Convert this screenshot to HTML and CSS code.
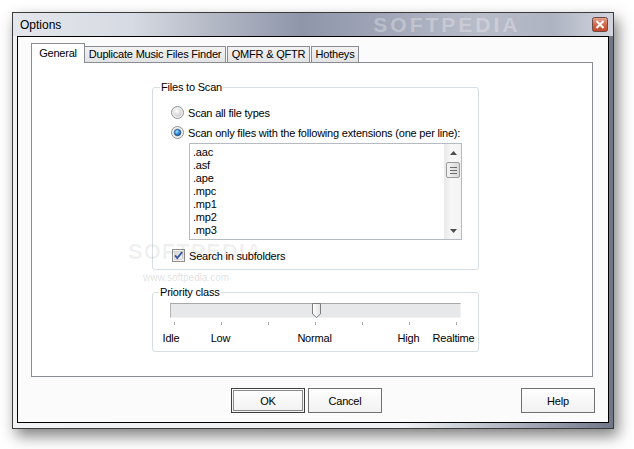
FILE: index.html
```html
<!DOCTYPE html>
<html>
<head>
<meta charset="utf-8">
<title>Options</title>
<link rel="stylesheet" href="styles.css">
</head>
<body>
<div class="window">
  <div class="titlebar">
    <span class="title">Options</span>
    <span class="wm-title">SOFTPEDIA</span>
    <span class="close">
      <svg width="16" height="15" viewBox="0 0 16 15">
        <defs>
          <linearGradient id="cg" x1="0" y1="0" x2="0" y2="1">
            <stop offset="0" stop-color="#e6a592"/>
            <stop offset="0.5" stop-color="#d16a4c"/>
            <stop offset="1" stop-color="#c04428"/>
          </linearGradient>
        </defs>
        <rect x="0.5" y="0.5" width="15" height="14" rx="2" fill="url(#cg)" stroke="#6e4a44"/>
        <path d="M5.2 4.7 L10.8 10.3 M10.8 4.7 L5.2 10.3" stroke="#fff" stroke-width="2" stroke-linecap="square"/>
      </svg>
    </span>
  </div>
  <div class="client">
    <div class="tabs">
      <div class="tab active t-general">General</div>
      <div class="tab t-dup">Duplicate Music Files Finder</div>
      <div class="tab t-qmfr">QMFR &amp; QFTR</div>
      <div class="tab t-hot">Hotheys</div>
    </div>
    <div class="panel">
      <fieldset class="group files">
        <legend>Files to Scan</legend>
        <div class="opt first">
          <svg class="radio" width="13" height="13" viewBox="0 0 13 13">
            <defs>
              <radialGradient id="rg" cx="0.4" cy="0.35" r="0.7">
                <stop offset="0" stop-color="#ffffff"/>
                <stop offset="1" stop-color="#c9c9c9"/>
              </radialGradient>
            </defs>
            <circle cx="6.5" cy="6.5" r="6" fill="#f3f3f3" stroke="#8e8f8f"/>
            <circle cx="6.5" cy="6.5" r="4.3" fill="url(#rg)"/>
          </svg>
          <span>Scan all file types</span>
        </div>
        <div class="opt second">
          <svg class="radio" width="13" height="13" viewBox="0 0 13 13">
            <defs>
              <radialGradient id="rb" cx="0.4" cy="0.35" r="0.7">
                <stop offset="0" stop-color="#9fe3ff"/>
                <stop offset="0.6" stop-color="#2a8ad8"/>
                <stop offset="1" stop-color="#0f3f86"/>
              </radialGradient>
            </defs>
            <circle cx="6.5" cy="6.5" r="6" fill="#f3f3f3" stroke="#8e8f8f"/>
            <circle cx="6.5" cy="6.5" r="4.3" fill="#d4d4d4"/>
            <circle cx="6.5" cy="6.5" r="3.2" fill="url(#rb)" stroke="#1c3f73" stroke-width="0.6"/>
          </svg>
          <span>Scan only files with the following extensions (one per line):</span>
        </div>
        <div class="listbox">
          <div class="items">
            <div class="item">.aac</div>
            <div class="item">.asf</div>
            <div class="item">.ape</div>
            <div class="item">.mpc</div>
            <div class="item">.mp1</div>
            <div class="item">.mp2</div>
            <div class="item">.mp3</div>
          </div>
          <div class="scrollbar">
            <div class="sb-btn">
              <svg width="7" height="4" viewBox="0 0 7 4"><path d="M0 4 L3.5 0 L7 4 Z" fill="#4d4d4d"/></svg>
            </div>
            <div class="sb-thumb">
              <span class="grip"></span><span class="grip"></span><span class="grip"></span>
            </div>
            <div class="sb-track"></div>
            <div class="sb-btn">
              <svg width="7" height="4" viewBox="0 0 7 4"><path d="M0 0 L7 0 L3.5 4 Z" fill="#4d4d4d"/></svg>
            </div>
          </div>
        </div>
        <div class="opt check">
          <svg class="checkbox" width="13" height="13" viewBox="0 0 13 13">
            <defs>
              <linearGradient id="kg" x1="0" y1="0" x2="1" y2="1">
                <stop offset="0" stop-color="#d6d6d6"/>
                <stop offset="1" stop-color="#fbfbfb"/>
              </linearGradient>
            </defs>
            <rect x="0.5" y="0.5" width="12" height="12" fill="#f4f4f4" stroke="#8e8f8f"/>
            <rect x="2.5" y="2.5" width="8" height="8" fill="url(#kg)" stroke="#c4c4c4" stroke-width="0.6"/>
            <path d="M3 6.3 L5.3 9 L10.2 3" fill="none" stroke="#3a5aa6" stroke-width="1.9"/>
          </svg>
          <span>Search in subfolders</span>
        </div>
      </fieldset>

      <fieldset class="group priority">
        <legend>Priority class</legend>
        <div class="track">
          <span class="thumb">
            <svg width="9" height="15" viewBox="0 0 9 15">
              <defs>
                <linearGradient id="tg" x1="0" y1="0" x2="1" y2="0">
                  <stop offset="0" stop-color="#ffffff"/>
                  <stop offset="1" stop-color="#e2e2e2"/>
                </linearGradient>
              </defs>
              <path d="M0.5 0.5 H8.5 V11 L4.5 14.5 L0.5 11 Z" fill="url(#tg)" stroke="#7d7d7d"/>
            </svg>
          </span>
        </div>
        <div class="ticks">
          <i></i><i></i><i></i><i></i><i></i><i></i><i></i>
        </div>
        <div class="labels">
          <span>Idle</span><span>Low</span><span></span><span>Normal</span><span></span><span>High</span><span class="rt">Realtime</span>
        </div>
      </fieldset>

      <span class="wm-big">SOFTPEDIA</span>
      <span class="wm-url">www.softpedia.com</span>
    </div>
    <div class="buttons">
      <div class="btn default"><span>OK</span></div>
      <div class="btn cancel"><span>Cancel</span></div>
      <div class="btn help"><span>Help</span></div>
    </div>
  </div>
</div>
</body>
</html>
```

FILE: styles.css
```css
* { box-sizing: border-box; }

html { background: #ffffff; }

body {
  margin: 0;
  padding: 12px 0 0 12px;
  min-height: 449px;
  background: #ffffff;
  font-family: "Liberation Sans", Arial, sans-serif;
  font-size: 11px;
  letter-spacing: -0.2px;
  color: #000;
}

.window {
  width: 602px;
  height: 417px;
  border: 1px solid #3b3b3b;
  background: linear-gradient(90deg, #f1f2f4 0%, #eef0f3 65%, #a7adbb 85%, #6f7688 100%);
  box-shadow: 4px 7px 14px rgba(0, 0, 0, 0.5);
  display: flex;
  flex-direction: column;
}

.titlebar {
  height: 23px;
  display: flex;
  align-items: flex-start;
  padding-left: 7px;
  background: linear-gradient(90deg, #e3e6ec 0%, #d6dae2 20%, #b4b9c6 33%, #8f96aa 48%, #9ea4b6 60%, #b9bdca 78%, #aeb3c2 90%, #d2d5de 100%);
}

.title {
  font-size: 12px;
  letter-spacing: 0;
  line-height: 16px;
  margin-top: 4px;
  color: #000;
}

.wm-title {
  flex: none;
  margin-left: 312px;
  margin-top: 1px;
  font-size: 21px;
  font-weight: bold;
  letter-spacing: 3px;
  line-height: 21px;
  color: rgba(255, 255, 255, 0.28);
  white-space: nowrap;
}

.close {
  flex: none;
  margin-left: auto;
  margin-right: 5px;
  margin-top: 4px;
  width: 16px;
  height: 15px;
  display: flex;
}

.client {
  flex: 1;
  margin: 0 4px 5px 4px;
  border: 1px solid #000;
  background: #fbfbfb;
  padding: 6px 15px 0 13px;
  display: flex;
  flex-direction: column;
}

.tabs {
  display: flex;
  align-items: flex-end;
  height: 19px;
}

.tab {
  height: 16px;
  border: 1px solid #898c95;
  border-bottom: none;
  background: linear-gradient(#f3f3f3, #e3e3e3);
  text-align: center;
  line-height: 15px;
  white-space: nowrap;
}

.tab.active {
  height: 20px;
  margin-bottom: -1px;
  background: #ffffff;
  position: relative;
  z-index: 1;
  line-height: 19px;
}

.t-general { width: 54px; }
.t-dup { width: 142px; margin-left: -1px; }
.t-qmfr { width: 83px; margin-left: 1px; }
.t-hot { width: 48px; margin-left: 1px; }

.panel {
  position: relative;
  height: 315px;
  border: 1px solid #898c95;
  background: #ffffff;
  padding: 18px 0 0 120px;
}

.group {
  margin: 0;
  width: 327px;
  border: 1px solid #d5dfe5;
  border-radius: 3px;
  min-width: 0;
}

.group legend {
  margin-left: -11px;
  padding: 0 1px;
  line-height: 13px;
  font-size: 11px;
}

.files {
  padding: 0 0 5px 18px;
}

.opt {
  display: flex;
  align-items: center;
  height: 17px;
  white-space: nowrap;
}

.opt svg { flex: none; margin-right: 4px; }

.opt.first { margin-top: 10px; }
.opt.second { margin-top: 3px; }

.listbox {
  margin: 2px 0 0 18px;
  width: 273px;
  height: 97px;
  border: 1px solid #b6bac1;
  background: #fff;
  display: flex;
}

.items {
  flex: 1;
  padding: 2px 0 0 3px;
  overflow: hidden;
}

.item {
  line-height: 13px;
  height: 13px;
}

.scrollbar {
  width: 17px;
  background: linear-gradient(90deg, #eaeaea, #f7f7f7 40%, #f3f3f3);
  border-left: 1px solid #ececec;
  display: flex;
  flex-direction: column;
}

.sb-btn {
  height: 17px;
  display: flex;
  align-items: center;
  justify-content: center;
}

.sb-thumb {
  margin: 1px 1px 0 1px;
  height: 16px;
  border: 1px solid #9a9a9a;
  border-radius: 2px;
  background: linear-gradient(90deg, #f4f4f4, #e6e6e6 50%, #d9d9d9);
  display: flex;
  flex-direction: column;
  align-items: center;
  justify-content: center;
  gap: 2px;
}

.grip {
  width: 7px;
  height: 1px;
  background: #6c6c6c;
}

.sb-track { flex: 1; }

.opt.check {
  margin-top: 7px;
  padding-left: 1px;
}

.priority {
  margin-top: 16px;
  padding: 0 0 6px 17px;
}

.track {
  position: relative;
  margin-top: 4px;
  width: 291px;
  height: 15px;
  background: #e7e8e9;
  border-top: 1px solid #a8a8a8;
  border-left: 1px solid #b4b4b4;
  border-bottom: 1px solid #f2f2f2;
  border-right: 1px solid #f2f2f2;
}

.thumb {
  position: absolute;
  left: 141px;
  top: -1px;
  width: 9px;
  height: 15px;
  display: flex;
}

.ticks {
  margin-top: 4px;
  width: 291px;
  height: 3px;
  padding: 0 4px;
  display: flex;
  justify-content: space-between;
}

.ticks i {
  width: 1px;
  height: 3px;
  background: #a9a9a9;
}

.labels {
  margin: 7px 0 0 -20px;
  display: grid;
  grid-template-columns: repeat(7, 47px);
  line-height: 13px;
}

.labels span {
  text-align: center;
  white-space: nowrap;
}

.labels span:first-child { padding-right: 5px; }

.labels .rt { margin-left: -4px; }

.wm-big {
  position: absolute;
  left: 96px;
  top: 176px;
  font-size: 22px;
  font-weight: bold;
  letter-spacing: 1px;
  color: rgba(0, 0, 0, 0.06);
  pointer-events: none;
}

.wm-url {
  position: absolute;
  left: 111px;
  top: 209px;
  font-size: 10px;
  letter-spacing: 0;
  color: rgba(0, 0, 0, 0.15);
}

.buttons {
  display: flex;
  margin-top: 11px;
  padding-left: 200px;
  margin-right: -2px;
}

.btn {
  width: 74px;
  height: 25px;
  border: 1px solid #707070;
  background: linear-gradient(#fefefe, #f1f1f1);
  display: flex;
  align-items: center;
  justify-content: center;
}

.btn.default {
  border-color: #3f3f3f;
  padding: 1px;
}

.btn.default span {
  flex: 1;
  align-self: stretch;
  display: flex;
  align-items: center;
  justify-content: center;
  border: 1px solid #8a8a8a;
}

.btn.cancel { margin-left: 3px; }
.btn.help { margin-left: auto; }
```
